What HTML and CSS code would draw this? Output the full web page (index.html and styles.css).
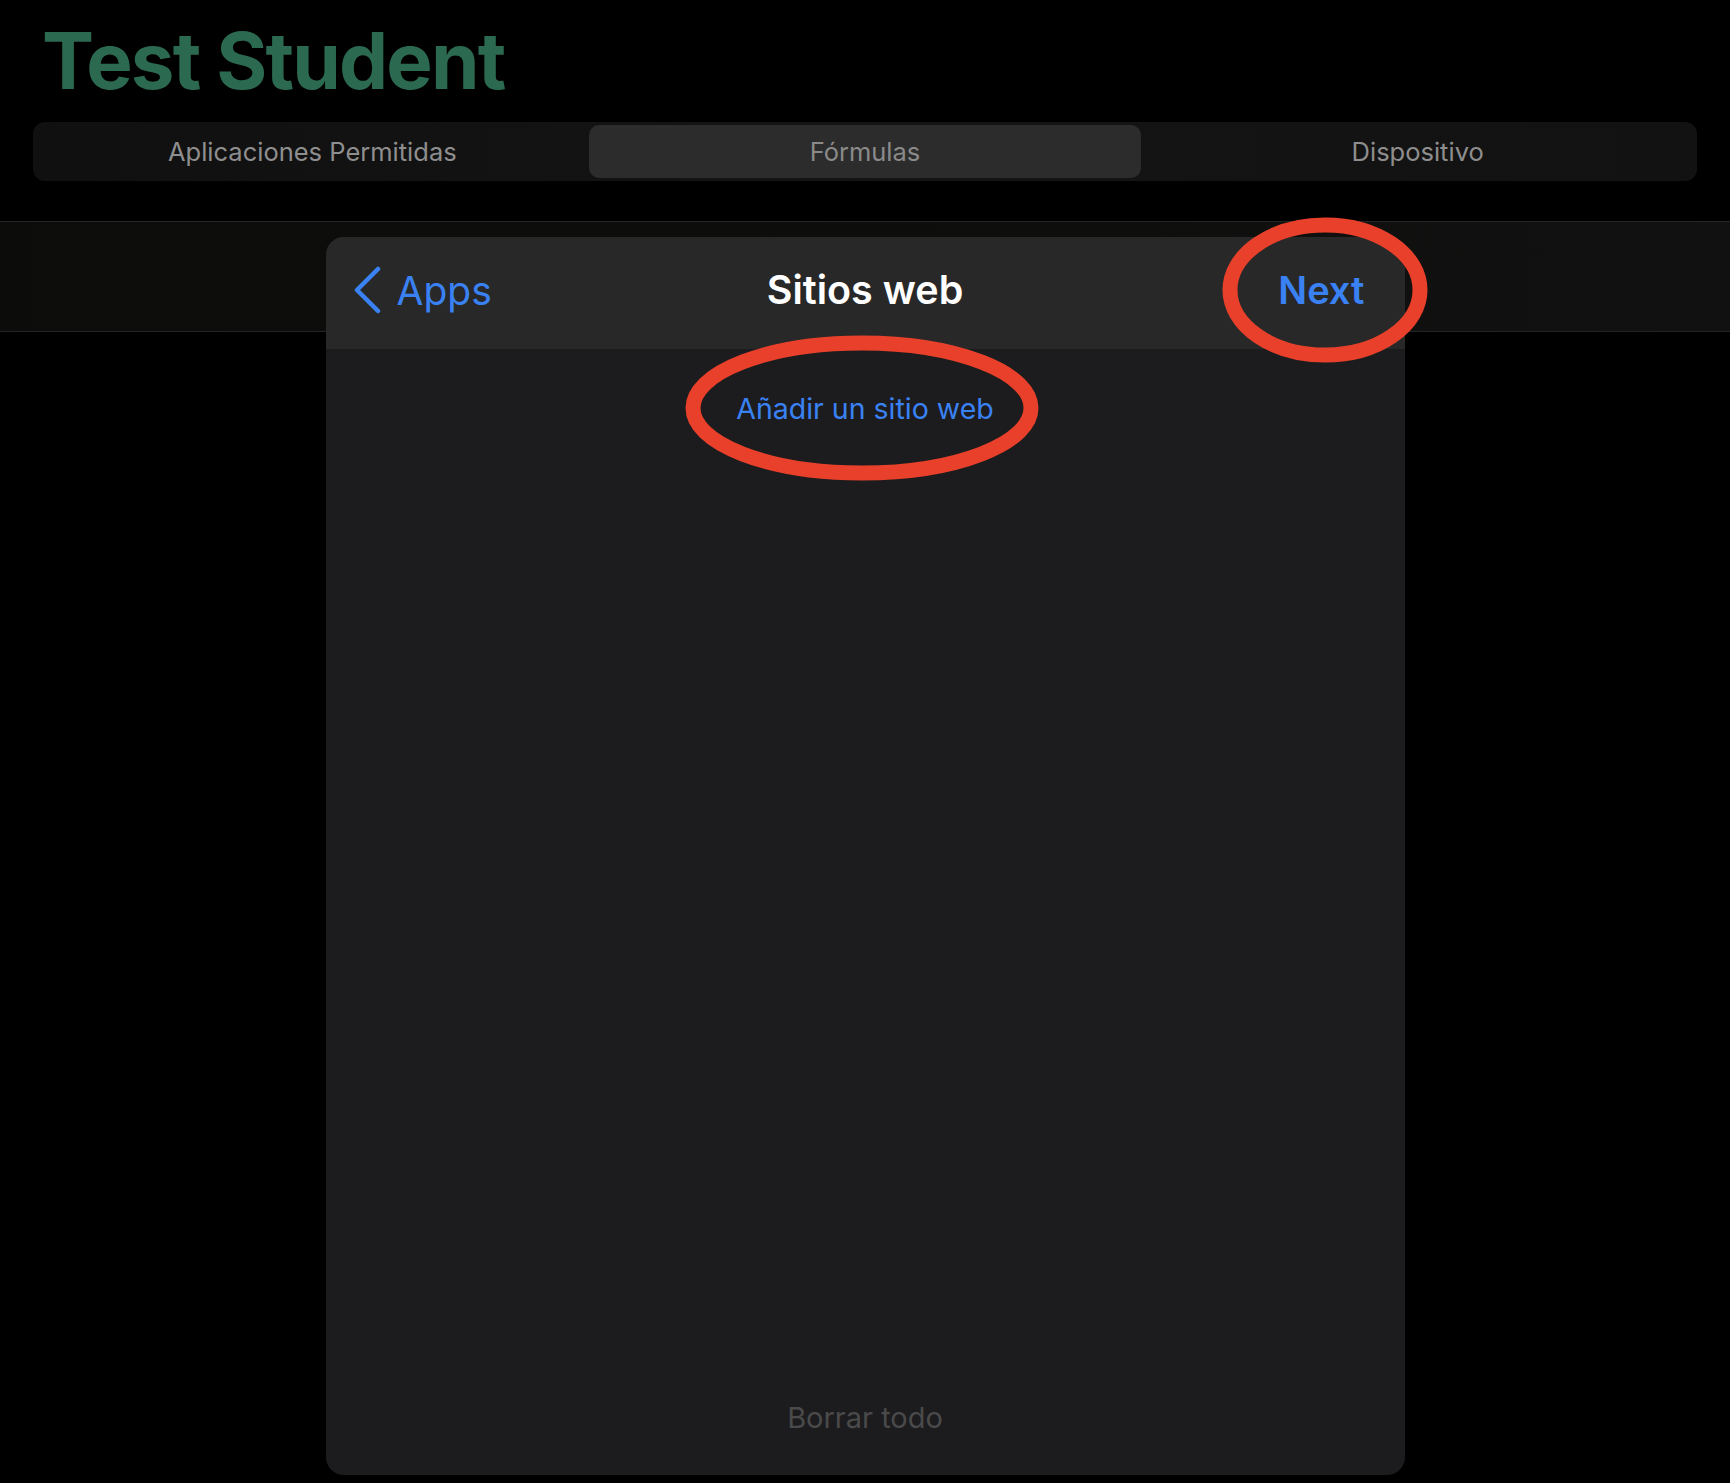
FILE: index.html
```html
<!DOCTYPE html>
<html lang="es">
<head>
  <meta charset="UTF-8" />
  <meta name="viewport" content="width=device-width, initial-scale=1.0"/>
  <title>Sitios web</title>
  <link rel="stylesheet" href="styles.css">
</head>
<body>

  <header class="top">
    <h1 class="student">Test Student</h1>
    <nav class="segments">
      <div class="segment">Aplicaciones Permitidas</div>
      <div class="segment active">Fórmulas</div>
      <div class="segment">Dispositivo</div>
    </nav>
  </header>

  <main class="stage">
    <section class="sheet">
      <div class="sheet-head">
        <div class="back">
          <svg class="chevron" width="30" height="48" viewBox="0 0 30 48">
            <path d="M25 3 L4 24 L25 45" fill="none" stroke="#3a82f4" stroke-width="4.5" stroke-linecap="round" stroke-linejoin="round"/>
          </svg>
          <span>Apps</span>
        </div>
        <div class="sheet-title">Sitios web</div>
        <div class="next">Next</div>
      </div>

      <div class="sheet-body">
        <div class="add-site">Añadir un sitio web</div>
        <div class="clear-all">Borrar todo</div>
      </div>

      <!-- red marker rings drawn over the sheet -->
      <svg class="marks" width="1079" height="1238" viewBox="0 0 1079 1238">
        <ellipse cx="999" cy="53" rx="95" ry="65" fill="none" stroke="#e8402a" stroke-width="15"/>
        <ellipse cx="536" cy="171" rx="169" ry="65" fill="none" stroke="#e8402a" stroke-width="15"/>
      </svg>
    </section>
  </main>

</body>
</html>
```

FILE: styles.css
```css
body {
  margin: 0;
  background-color: #000;
  font-family: Inter, "Noto Sans", "Liberation Sans", sans-serif;
  overflow: hidden;
}

.top {
  padding: 9px 33px 40px;
}

.student {
  margin: 0 0 9px 9px;
  height: 104px;
  line-height: 104px;
  font-size: 78px;
  font-weight: 700;
  letter-spacing: -1.8px;
  color: #2b6a51;
}

.segments {
  display: grid;
  grid-template-columns: repeat(3, 1fr);
  height: 59px;
  padding: 3px 3px;
  box-sizing: border-box;
  background: linear-gradient(90deg, #101010, #141414 50%, #121212);
  border-radius: 12px;
}

.segment {
  display: flex;
  align-items: center;
  justify-content: center;
  font-size: 25.5px;
  color: #8e8e8e;
  border-radius: 10px;
}

.segment.active {
  background-color: #2c2c2c;
  color: #8a8a8a;
}

.stage {
  border-top: 1px solid #252525;
  padding-top: 15px;
  background:
    linear-gradient(#242424, #242424) 0 109px / 100% 1px no-repeat,
    linear-gradient(90deg, #0c0d0b, #0e0f0d 60%, #111) 0 0 / 100% 109px no-repeat,
    #000;
}

.sheet {
  position: relative;
  width: 1079px;
  height: 1238px;
  margin: 0 auto;
  display: flex;
  flex-direction: column;
  border-radius: 18px;
  background-color: #1c1c1e;
}

.sheet-head {
  display: grid;
  grid-template-columns: 1fr auto 1fr;
  align-items: center;
  height: 112px;
  padding: 0 40px 6px;
  box-sizing: border-box;
  background-color: #282828;
  border-radius: 18px 18px 0 0;
}

.back {
  display: flex;
  align-items: center;
  gap: 14px;
  margin-left: -13px;
  font-size: 39px;
  color: #3a82f4;
}

.chevron {
  display: block;
}

.sheet-title {
  font-size: 39.5px;
  font-weight: 600;
  color: #fff;
}

.next {
  justify-self: end;
  font-size: 38px;
  font-weight: 600;
  color: #3a82f4;
}

.sheet-body {
  flex: 1;
  display: flex;
  flex-direction: column;
  justify-content: space-between;
  align-items: center;
  padding: 38px 0 35px;
  font-size: 28.5px;
  line-height: 44px;
}

.add-site {
  color: #3a82f4;
}

.clear-all {
  font-size: 29px;
  color: #4a4a4a;
}

.marks {
  position: absolute;
  left: 0;
  top: 0;
  overflow: visible;
  pointer-events: none;
}
```
